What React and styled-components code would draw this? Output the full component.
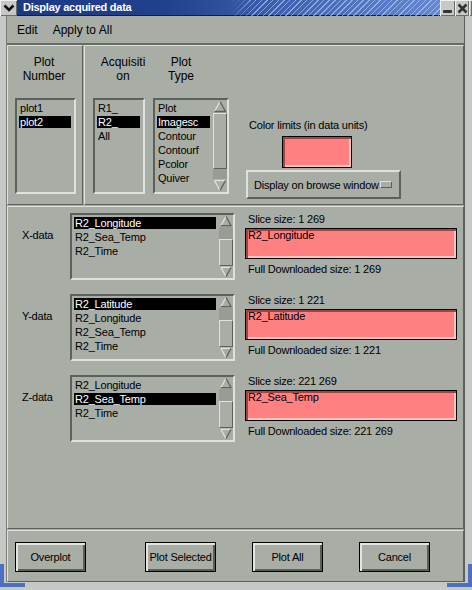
import React from "react";
import styled, { createGlobalStyle } from "styled-components";

const BG = "#a8ada6";
const LIGHT = "#dee1dd";
const DARK = "#5d615c";
const PINK = "#ff8080";

const GlobalStyle = createGlobalStyle`
  html, body {
    margin: 0;
    padding: 0;
    background: ${BG};
    overflow: hidden;
  }
`;

const Window = styled.div`
  position: relative;
  width: 472px;
  height: 590px;
  display: flex;
  flex-direction: column;
  background: ${BG};
  font-family: "Liberation Sans", Arial, sans-serif;
  font-size: 11px;
  letter-spacing: -0.2px;
  color: #000;
  overflow: hidden;
`;

const TitleBar = styled.div`
  height: 16px;
  flex-shrink: 0;
  display: flex;
  align-items: stretch;
  background: linear-gradient(90deg, #1b3883 0%, #21408d 35%, #3e61b0 60%, #6e90d8 100%);
  box-shadow: inset 0 -1px 0 #0e1f4c;
`;

const WinButton = styled.div`
  width: ${(p) => p.$w}px;
  display: flex;
  align-items: center;
  justify-content: center;
  background: #c6c9c5;
  box-shadow: inset 1px 1px 0 #f0f0f0, inset -1px -1px 0 #6a6e69;
`;

const TitleText = styled.div`
  padding-left: 6px;
  color: #fff;
  font-weight: bold;
  font-size: 11px;
  letter-spacing: -0.25px;
  line-height: 15px;
  white-space: nowrap;
`;

const TitleFill = styled.div`
  flex: 1;
  background: repeating-linear-gradient(
    135deg,
    rgba(190, 210, 250, 0.6) 0 1px,
    transparent 1px 4px
  );
  -webkit-mask-image: linear-gradient(90deg, transparent 0, transparent 32%, #000 40%);
  mask-image: linear-gradient(90deg, transparent 0, transparent 32%, #000 40%);
`;

const Frame = styled.div`
  flex: 1;
  display: flex;
  flex-direction: column;
  padding: 0 1px;
  border-style: solid;
  border-width: 0 7px 8px 6px;
  border-color: #c5c8c4;
  box-shadow: inset 1px 0 0 #7a7e79, inset -1px 0 0 ${DARK}, inset 0 -1px 0 ${DARK};
`;

const MenuBar = styled.div`
  height: 29px;
  box-sizing: border-box;
  display: flex;
  align-items: center;
  gap: 15px;
  padding-left: 10px;
  font-size: 12px;
  letter-spacing: 0;
  border-bottom: 2px solid #676b66;
`;

const TopRow = styled.div`
  height: 160px;
  display: flex;
  gap: 1px;
  margin-bottom: 1px;
`;

const Group = styled.div`
  box-sizing: border-box;
  width: ${(p) => (p.$w ? `${p.$w}px` : "auto")};
  flex: ${(p) => (p.$w ? "none" : 1)};
  display: flex;
  flex-direction: ${(p) => (p.$col ? "column" : "row")};
  border: 1px solid;
  border-color: ${LIGHT} ${DARK} ${DARK} ${LIGHT};
`;

const NumberGroup = styled(Group)`
  padding-left: 7px;
  gap: 15px;
`;

const Header = styled.div`
  width: ${(p) => p.$w}px;
  padding-top: 9px;
  font-size: 12px;
  letter-spacing: 0;
  line-height: 14px;
  text-align: center;
`;

const AcqPart = styled.div`
  display: flex;
  flex-direction: column;
  padding-left: 8px;
`;

const HeaderRow = styled.div`
  display: flex;
`;

const ListRow = styled.div`
  display: flex;
  gap: 8px;
  margin-top: 15px;
`;

const ColorSection = styled.div`
  display: flex;
  flex-direction: column;
  align-items: flex-start;
  margin-left: 17px;
  padding-top: 73px;
`;

const Caption = styled.div`
  line-height: 13px;
  padding-left: 3px;
  margin-top: ${(p) => p.$mt || 0}px;
  white-space: nowrap;
`;

const Swatch = styled.div`
  box-sizing: border-box;
  width: 70px;
  height: 32px;
  margin: 4px 0 2px 36px;
  background: ${PINK};
  border: 1px solid #000;
  box-shadow: inset 2px 2px 0 #9c4744, inset -2px -2px 0 #ffc2bd;
`;

const OptionButton = styled.div`
  box-sizing: border-box;
  width: 155px;
  height: 29px;
  display: flex;
  align-items: center;
  justify-content: space-between;
  padding: 0 7px 0 6px;
  border: 2px solid;
  border-color: ${LIGHT} ${DARK} ${DARK} ${LIGHT};
`;

const OptionMark = styled.div`
  box-sizing: border-box;
  width: 12px;
  height: 7px;
  border: 1px solid;
  border-color: ${LIGHT} ${DARK} ${DARK} ${LIGHT};
`;

const ListBox = styled.div`
  box-sizing: border-box;
  width: ${(p) => p.$w}px;
  height: ${(p) => p.$h}px;
  flex: none;
  display: flex;
  border: 2px solid;
  border-color: ${DARK} ${LIGHT} ${LIGHT} ${DARK};
`;

const Items = styled.div`
  flex: 1;
  min-width: 0;
  display: flex;
  flex-direction: column;
  padding: 1px 1px 0 0;
`;

const Item = styled.div`
  height: 12px;
  line-height: 12px;
  margin: 1px 2px;
  padding-left: 1px;
  white-space: nowrap;
  background: ${(p) => (p.$sel ? "#000" : "transparent")};
  color: ${(p) => (p.$sel ? "#fff" : "#000")};
`;

const ScrollBar = styled.div`
  width: 14px;
  flex: none;
  display: flex;
  flex-direction: column;
`;

const Track = styled.div`
  flex: 1;
  display: flex;
  flex-direction: column;
  background: #979c96;
`;

const Thumb = styled.div`
  box-sizing: border-box;
  margin-top: ${(p) => p.$top}px;
  height: ${(p) => p.$size}px;
  background: ${BG};
  border: 1px solid;
  border-color: ${LIGHT} ${DARK} ${DARK} ${LIGHT};
`;

const DataPanel = styled(Group)`
  height: 323px;
  flex: none;
  padding-top: 6px;
  gap: 14px;
  margin-bottom: 1px;
`;

const DataRow = styled.div`
  display: flex;
  height: 67px;
`;

const RowLabel = styled.div`
  box-sizing: border-box;
  width: 62px;
  padding: 16px 0 0 14px;
  line-height: 13px;
`;

const RightCol = styled.div`
  width: 212px;
  margin-left: 10px;
  display: flex;
  flex-direction: column;
`;

const ValueField = styled.div`
  box-sizing: border-box;
  height: 31px;
  margin-top: 2px;
  padding-left: 2px;
  line-height: 13px;
  background: ${PINK};
  border: 1px solid #000;
  box-shadow: inset 2px 2px 0 #9c4744, inset -2px -2px 0 #ffc2bd;
`;

const ButtonPanel = styled(Group)`
  height: 52px;
  flex: none;
  padding-top: 11px;
  align-items: flex-start;
`;

const PushButton = styled.div`
  box-sizing: border-box;
  width: 71px;
  height: 30px;
  margin-left: ${(p) => p.$ml}px;
  display: flex;
  align-items: center;
  justify-content: center;
  border: 1px solid #000;
  box-shadow: inset 2px 2px 0 #e2e5e1, inset -2px -2px 0 #5a5e59;
  white-space: nowrap;
`;

const CornerMark = styled.div`
  position: absolute;
  bottom: 3px;
  ${(p) => p.$side}: 0;
  width: 21px;
  height: 19px;
  border-bottom: 4px solid #4f70c2;
  border-${(p) => p.$side}: 4px solid #4f70c2;
`;

function Arrow({ down }) {
  return (
    <svg width="14" height="13" viewBox="0 0 14 13">
      {down ? (
        <>
          <polygon points="1.5,1.5 12.5,1.5 7,11.5" fill={BG} />
          <polyline points="1.5,1.5 12.5,1.5" stroke={LIGHT} strokeWidth="1.3" fill="none" />
          <polyline points="1.5,1.5 7,11.5" stroke={LIGHT} strokeWidth="1.3" fill="none" />
          <polyline points="12.5,1.5 7,11.5" stroke={DARK} strokeWidth="1.3" fill="none" />
        </>
      ) : (
        <>
          <polygon points="7,1.5 12.5,11.5 1.5,11.5" fill={BG} />
          <polyline points="1.5,11.5 7,1.5" stroke={LIGHT} strokeWidth="1.3" fill="none" />
          <polyline points="7,1.5 12.5,11.5 1.5,11.5" stroke={DARK} strokeWidth="1.3" fill="none" />
        </>
      )}
    </svg>
  );
}

function List({ w, h, items, sel, thumb }) {
  return (
    <ListBox $w={w} $h={h}>
      <Items>
        {items.map((it, i) => (
          <Item key={it} $sel={i === sel}>
            {it}
          </Item>
        ))}
      </Items>
      {thumb && (
        <ScrollBar>
          <Arrow />
          <Track>
            <Thumb $top={thumb[0]} $size={thumb[1]} />
          </Track>
          <Arrow down />
        </ScrollBar>
      )}
    </ListBox>
  );
}

const rows = [
  {
    label: "X-data",
    items: ["R2_Longitude", "R2_Sea_Temp", "R2_Time"],
    sel: 0,
    slice: "1 269",
    value: "R2_Longitude",
    full: "1 269",
  },
  {
    label: "Y-data",
    items: ["R2_Latitude", "R2_Longitude", "R2_Sea_Temp", "R2_Time"],
    sel: 0,
    slice: "1 221",
    value: "R2_Latitude",
    full: "1 221",
  },
  {
    label: "Z-data",
    items: ["R2_Longitude", "R2_Sea_Temp", "R2_Time"],
    sel: 1,
    slice: "221 269",
    value: "R2_Sea_Temp",
    full: "221 269",
  },
];

const buttons = [
  ["Overplot", 7],
  ["Plot Selected", 59],
  ["Plot All", 36],
  ["Cancel", 36],
];

export default function App() {
  return (
    <>
      <GlobalStyle />
      <Window>
        <TitleBar>
          <WinButton $w={17}>
            <svg width="12" height="8" viewBox="0 0 12 8">
              <polyline points="1.5,1.5 6,6 10.5,1.5" stroke="#111" strokeWidth="2.6" fill="none" />
            </svg>
          </WinButton>
          <TitleText>Display acquired data</TitleText>
          <TitleFill />
          <WinButton $w={15}>
            <svg width="11" height="12" viewBox="0 0 11 12">
              <rect x="1" y="8" width="9" height="3" rx="1" fill="#333" />
            </svg>
          </WinButton>
          <WinButton $w={14}>
            <svg width="11" height="11" viewBox="0 0 11 11">
              <path d="M1.5 1.5 L9.5 9.5 M9.5 1.5 L1.5 9.5" stroke="#333" strokeWidth="2.6" />
            </svg>
          </WinButton>
          <WinButton $w={3} />
        </TitleBar>
        <Frame>
          <MenuBar>
            <span>Edit</span>
            <span>Apply to All</span>
          </MenuBar>
          <TopRow>
            <NumberGroup $w={76} $col>
              <Header $w={58}>
                Plot
                <br />
                Number
              </Header>
              <List w={61} h={96} items={["plot1", "plot2"]} sel={1} />
            </NumberGroup>
            <Group>
              <AcqPart>
                <HeaderRow>
                  <Header $w={60}>
                    Acquisiti
                    <br />
                    on
                  </Header>
                  <Header $w={56}>
                    Plot
                    <br />
                    Type
                  </Header>
                </HeaderRow>
                <ListRow>
                  <List w={52} h={96} items={["R1_", "R2_", "All"]} sel={1} />
                  <List
                    w={76}
                    h={96}
                    items={["Plot", "Imagesc", "Contour", "Contourf", "Pcolor", "Quiver"]}
                    sel={1}
                    thumb={[0, 56]}
                  />
                </ListRow>
              </AcqPart>
              <ColorSection>
                <Caption>Color limits (in data units)</Caption>
                <Swatch />
                <OptionButton>
                  <span>Display on browse window</span>
                  <OptionMark />
                </OptionButton>
              </ColorSection>
            </Group>
          </TopRow>
          <DataPanel $col>
            {rows.map((r) => (
              <DataRow key={r.label}>
                <RowLabel>{r.label}</RowLabel>
                <List w={165} h={67} items={r.items} sel={r.sel} thumb={[12, 27]} />
                <RightCol>
                  <Caption>Slice size: {r.slice}</Caption>
                  <ValueField>{r.value}</ValueField>
                  <Caption $mt={4}>Full Downloaded size: {r.full}</Caption>
                </RightCol>
              </DataRow>
            ))}
          </DataPanel>
          <ButtonPanel>
            {buttons.map(([t, ml]) => (
              <PushButton key={t} $ml={ml}>
                {t}
              </PushButton>
            ))}
          </ButtonPanel>
        </Frame>
        <CornerMark $side="left" />
        <CornerMark $side="right" />
      </Window>
    </>
  );
}
